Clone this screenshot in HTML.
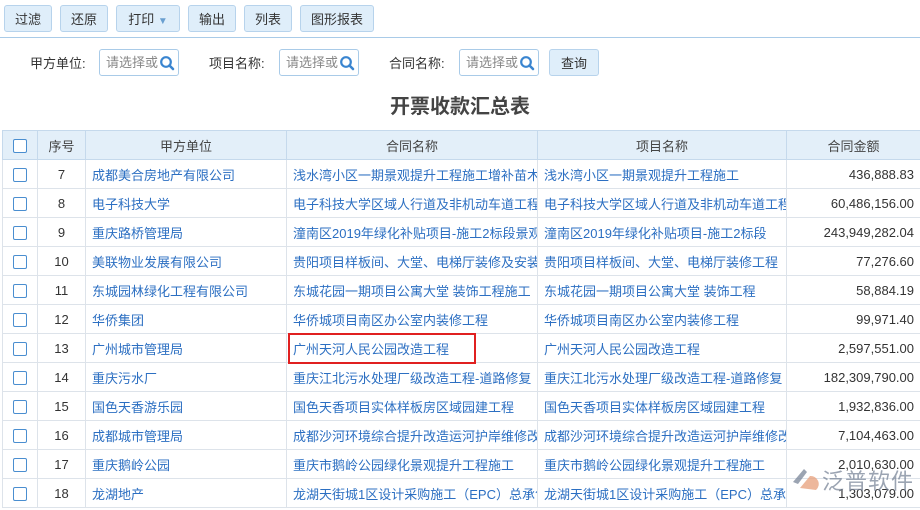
<!DOCTYPE html>
<html><head><meta charset="utf-8"><style>
body{margin:0;width:920px;height:510px;overflow:hidden;background:#fff;font-family:"Liberation Sans","Noto Sans CJK SC",sans-serif;font-size:13px;color:#333;position:relative}
.btn{position:absolute;top:5px;height:27px;background:#dfeefa;border:1px solid #b7d3ec;border-radius:3px;font-size:13px;line-height:27px;text-align:center;color:#333;box-sizing:border-box}
.sep{position:absolute;left:0;top:37px;width:920px;height:1px;background:#a9cbe8}
.lbl{position:absolute;top:53px;font-size:13px}
.inp{position:absolute;top:49px;width:80px;height:27px;border:1px solid #a9cbe8;border-radius:3px;box-sizing:border-box;color:#888;line-height:25px;padding-left:6px;font-size:13px;overflow:hidden;white-space:nowrap}
.inp svg{position:absolute;right:3px;top:5px}
.title{position:absolute;top:90px;left:0;width:920px;text-align:center;font-size:20px;font-weight:bold;color:#444}
table{position:absolute;left:2px;top:130px;border-collapse:collapse;table-layout:fixed;width:918px}
td,th{border:1px solid #dde3ea;height:28px;padding:0 6px;white-space:nowrap;overflow:hidden;font-size:13px}
th{background:#e3eff9;font-weight:normal;color:#444;border-color:#c5d9ec}
td{color:#2c6fc2}
td.n{text-align:center;color:#333}
td.r{text-align:right;color:#333}
.cb{display:inline-block;width:12px;height:12px;border:1px solid #4a8ed0;border-radius:2px;vertical-align:middle;background:#fff}
</style></head><body>
<div class="btn" style="left:4px;width:48px">过滤</div>
<div class="btn" style="left:60px;width:48px">还原</div>
<div class="btn" style="left:116px;width:64px">打印 <span style="color:#6a9fd0;font-size:10px">▼</span></div>
<div class="btn" style="left:188px;width:48px">输出</div>
<div class="btn" style="left:244px;width:48px">列表</div>
<div class="btn" style="left:300px;width:74px">图形报表</div>
<div class="sep"></div>
<div class="lbl" style="left:30px">甲方单位:</div>
<div class="inp" style="left:99px">请选择或<svg width="16" height="16" viewBox="0 0 16 16"><circle cx="7" cy="7" r="4.8" fill="none" stroke="#3a85d0" stroke-width="2.2"/><path d="M10.5 10.5L14 14" stroke="#3a85d0" stroke-width="2.6" stroke-linecap="round"/></svg></div>
<div class="lbl" style="left:209px">项目名称:</div>
<div class="inp" style="left:279px">请选择或<svg width="16" height="16" viewBox="0 0 16 16"><circle cx="7" cy="7" r="4.8" fill="none" stroke="#3a85d0" stroke-width="2.2"/><path d="M10.5 10.5L14 14" stroke="#3a85d0" stroke-width="2.6" stroke-linecap="round"/></svg></div>
<div class="lbl" style="left:389px">合同名称:</div>
<div class="inp" style="left:459px">请选择或<svg width="16" height="16" viewBox="0 0 16 16"><circle cx="7" cy="7" r="4.8" fill="none" stroke="#3a85d0" stroke-width="2.2"/><path d="M10.5 10.5L14 14" stroke="#3a85d0" stroke-width="2.6" stroke-linecap="round"/></svg></div>
<div class="btn" style="left:549px;top:49px;width:50px">查询</div>
<div class="title">开票收款汇总表</div>
<table>
<colgroup><col style="width:35px"><col style="width:48px"><col style="width:201px"><col style="width:251px"><col style="width:249px"><col style="width:134px"></colgroup>
<tr><th><span class="cb"></span></th><th>序号</th><th>甲方单位</th><th>合同名称</th><th>项目名称</th><th>合同金额</th></tr>
<tr><td class="n"><span class="cb"></span></td><td class="n">7</td><td>成都美合房地产有限公司</td><td>浅水湾小区一期景观提升工程施工增补苗木</td><td>浅水湾小区一期景观提升工程施工</td><td class="r">436,888.83</td></tr>
<tr><td class="n"><span class="cb"></span></td><td class="n">8</td><td>电子科技大学</td><td>电子科技大学区域人行道及非机动车道工程</td><td>电子科技大学区域人行道及非机动车道工程</td><td class="r">60,486,156.00</td></tr>
<tr><td class="n"><span class="cb"></span></td><td class="n">9</td><td>重庆路桥管理局</td><td>潼南区2019年绿化补贴项目-施工2标段景观</td><td>潼南区2019年绿化补贴项目-施工2标段</td><td class="r">243,949,282.04</td></tr>
<tr><td class="n"><span class="cb"></span></td><td class="n">10</td><td>美联物业发展有限公司</td><td>贵阳项目样板间、大堂、电梯厅装修及安装</td><td>贵阳项目样板间、大堂、电梯厅装修工程</td><td class="r">77,276.60</td></tr>
<tr><td class="n"><span class="cb"></span></td><td class="n">11</td><td>东城园林绿化工程有限公司</td><td>东城花园一期项目公寓大堂 装饰工程施工</td><td>东城花园一期项目公寓大堂 装饰工程</td><td class="r">58,884.19</td></tr>
<tr><td class="n"><span class="cb"></span></td><td class="n">12</td><td>华侨集团</td><td>华侨城项目南区办公室内装修工程</td><td>华侨城项目南区办公室内装修工程</td><td class="r">99,971.40</td></tr>
<tr><td class="n"><span class="cb"></span></td><td class="n">13</td><td>广州城市管理局</td><td>广州天河人民公园改造工程</td><td>广州天河人民公园改造工程</td><td class="r">2,597,551.00</td></tr>
<tr><td class="n"><span class="cb"></span></td><td class="n">14</td><td>重庆污水厂</td><td>重庆江北污水处理厂级改造工程-道路修复</td><td>重庆江北污水处理厂级改造工程-道路修复</td><td class="r">182,309,790.00</td></tr>
<tr><td class="n"><span class="cb"></span></td><td class="n">15</td><td>国色天香游乐园</td><td>国色天香项目实体样板房区域园建工程</td><td>国色天香项目实体样板房区域园建工程</td><td class="r">1,932,836.00</td></tr>
<tr><td class="n"><span class="cb"></span></td><td class="n">16</td><td>成都城市管理局</td><td>成都沙河环境综合提升改造运河护岸维修改</td><td>成都沙河环境综合提升改造运河护岸维修改</td><td class="r">7,104,463.00</td></tr>
<tr><td class="n"><span class="cb"></span></td><td class="n">17</td><td>重庆鹅岭公园</td><td>重庆市鹅岭公园绿化景观提升工程施工</td><td>重庆市鹅岭公园绿化景观提升工程施工</td><td class="r">2,010,630.00</td></tr>
<tr><td class="n"><span class="cb"></span></td><td class="n">18</td><td>龙湖地产</td><td>龙湖天街城1区设计采购施工（EPC）总承包</td><td>龙湖天街城1区设计采购施工（EPC）总承包</td><td class="r">1,303,079.00</td></tr>
</table>
<div style="position:absolute;left:288px;top:333px;width:188px;height:31px;border:2px solid #e02020;box-sizing:border-box"></div>
<div style="position:absolute;left:790px;top:462px;width:130px;height:40px;opacity:.75;white-space:nowrap">
<svg width="30" height="30" viewBox="0 0 30 30" style="position:absolute;left:0;top:4px"><path d="M3 16L14 3L17 6L8 18Z" fill="#7a8699"/><path d="M10 22L20 10A8 8 0 0 1 26 24Z" fill="#e8a07a"/></svg>
<span style="position:absolute;left:32px;top:2px;font-size:22px;color:#7a8699;letter-spacing:1px">泛普软件</span>
</div>
</body></html>
